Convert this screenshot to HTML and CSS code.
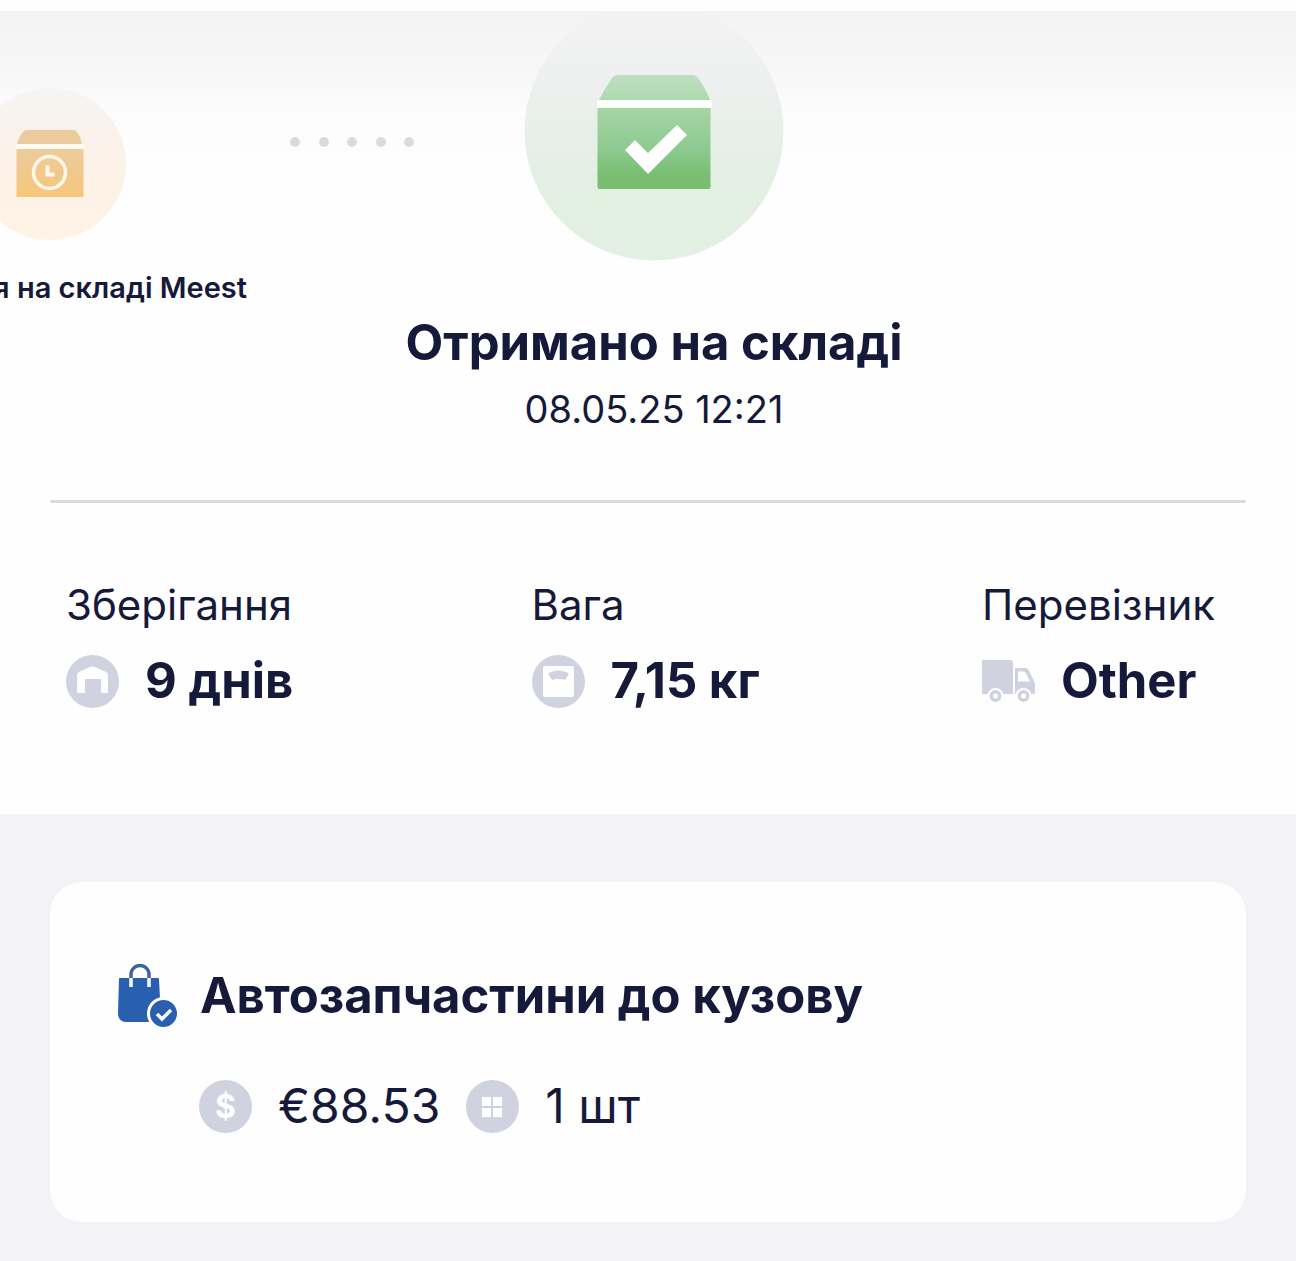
FILE: index.html
```html
<!DOCTYPE html>
<html lang="uk">
<head>
<meta charset="utf-8">
<meta name="viewport" content="width=device-width, initial-scale=1">
<title>Отримано на складі</title>
<link rel="stylesheet" href="styles.css">
</head>
<body>
<main class="page">
  <section class="tracker" aria-label="Статус">
    <div class="previous">
      <div class="previous-step">
        <svg class="previous-icon" viewBox="0 0 152 152" aria-hidden="true">
          <defs>
            <linearGradient id="amber-disc" x1="0" y1="0" x2="0" y2="1">
              <stop offset="0" stop-color="#f5f5f3"/><stop offset=".3" stop-color="#faf2eb"/><stop offset=".65" stop-color="#fdf2e6"/><stop offset="1" stop-color="#fef3e4"/>
            </linearGradient>
            <linearGradient id="amber-box" x1="0" y1="0" x2="0" y2="1">
              <stop offset="0" stop-color="#eccb9d"/><stop offset="1" stop-color="#f6c67b"/>
            </linearGradient>
          </defs>
          <circle cx="76" cy="76" r="76" fill="url(#amber-disc)"/>
          <path d="M53 42h46q2 0 3 1 4 4 6 13H43q2-8 7-13 1-1 3-1z" fill="#eacb9e"/>
          <path d="M42 56h68v5H42z" fill="#fffaf2"/>
          <path d="M42.500 61h67v48h-67z" fill="url(#amber-box)"/>
          <circle cx="75.500" cy="84.500" r="16" fill="none" stroke="#fff8ea" stroke-width="3.500"/>
          <path d="M73.500 77.500v9h7" fill="none" stroke="#fff8ea" stroke-width="4"/>
        </svg>
        <p class="previous-label">я на складі Meest</p>
      </div>
      <div class="dots" aria-hidden="true"><i></i><i></i><i></i><i></i><i></i></div>
    </div>
    <div class="current">
      <svg class="current-icon" viewBox="0 0 260 260" aria-hidden="true">
        <defs>
          <linearGradient id="green-disc" x1="0" y1="0" x2="0" y2="1">
            <stop offset="0" stop-color="#f3f3f3"/><stop offset=".3" stop-color="#eef0ef"/><stop offset=".55" stop-color="#e6efe8"/><stop offset=".8" stop-color="#e1f0e0"/><stop offset="1" stop-color="#e3f0e4"/>
          </linearGradient>
          <linearGradient id="green-box" x1="0" y1="0" x2="0" y2="1">
            <stop offset="0" stop-color="#a6d4a6"/><stop offset=".5" stop-color="#8dca8f"/><stop offset=".85" stop-color="#78bd70"/><stop offset="1" stop-color="#7abd73"/>
          </linearGradient>
          <linearGradient id="green-lid" x1="0" y1="0" x2="0" y2="1">
            <stop offset="0" stop-color="#bedfbf"/><stop offset="1" stop-color="#aed9b0"/>
          </linearGradient>
        </defs>
        <circle cx="130" cy="130" r="129.500" fill="url(#green-disc)"/>
        <path d="M94 74h74q4 0 6 3 7 9 12 22H75q6-12 13-22 2-3 6-3z" fill="url(#green-lid)"/>
        <path d="M73 99h115v8H73z" fill="#f9fffa"/>
        <path d="M73.500 107h113v79q0 2-2 2h-109q-2 0-2-2z" fill="url(#green-box)"/>
        <path d="M101 149l10-10 13 13 29-28 10 10-39 39z" fill="#fff"/>
      </svg>
      <h1 class="current-title">Отримано на складі</h1>
      <p class="current-date">08.05.25 12:21</p>
    </div>
  </section>

  <hr class="divider">

  <dl class="facts">
    <div class="fact">
      <dt>Зберігання</dt>
      <dd>
        <svg class="icon" viewBox="0 0 53 53" aria-hidden="true"><circle cx="26.500" cy="26.500" r="26.500" fill="#d0d3df"/><path d="M11 38V20q0-2 2-3l11-5q2.500-1 5 0l11 5q2 1 2 3v18h-7V25q0-1-1-1H20q-1 0-1 1v13z" fill="#fff"/></svg>
        9 днів
      </dd>
    </div>
    <div class="fact">
      <dt>Вага</dt>
      <dd>
        <svg class="icon" viewBox="0 0 53 53" aria-hidden="true"><circle cx="26.500" cy="26.500" r="26.500" fill="#d0d3df"/><rect x="11" y="11" width="31" height="31" rx="2" fill="#fff"/><path d="M16 19q2-3 10.500-3.500Q35 16 37 19l-4 6q-2-1-6.500-1t-6.500 1z" fill="#d0d3df"/></svg>
        7,15 кг
      </dd>
    </div>
    <div class="fact">
      <dt>Перевізник</dt>
      <dd>
        <svg class="icon" viewBox="0 0 53 53" aria-hidden="true"><path d="M0 5h28q3 0 3 3v31H0z" fill="#d0d3df"/><path d="M33 13h10q3 0 4 3l5 10q1 2 1 4v9H33z" fill="#d0d3df"/><path d="M36 16.500h5q2 0 3 2l4 8H36z" fill="#fff"/><g fill="#d0d3df" stroke="#fff" stroke-width="2"><circle cx="13.500" cy="41" r="7"/><circle cx="41.500" cy="41" r="7"/></g><circle cx="13.500" cy="41" r="2.500" fill="#fff"/><circle cx="41.500" cy="41" r="2.500" fill="#fff"/></svg>
        Other
      </dd>
    </div>
  </dl>

  <section class="parcel">
    <article class="card">
      <h2 class="card-title">
        <svg class="bag" viewBox="0 0 60 64" aria-hidden="true"><path d="M2 14h38q1 0 1 1l2 39q0 4-4 4H9q-9 0-9-9L1 15q0-1 1-1z" fill="#285faf"/><path d="M13 14V10.500a9 9 0 0 1 18 0V14" fill="none" stroke="#3a65a2" stroke-width="3.500"/><path d="M13 14v9M31 14v9" stroke="#fff" stroke-width="3.500"/><circle cx="45.500" cy="49.500" r="15" fill="#285faf" stroke="#fff" stroke-width="3"/><path d="M39 50l5 5 9-9" fill="none" stroke="#fff" stroke-width="3.500"/></svg>
        Автозапчастини до кузову
      </h2>
      <div class="card-row">
        <span class="coin" aria-hidden="true">$</span>
        <span class="price">€88.53</span>
        <svg class="icon" viewBox="0 0 53 53" aria-hidden="true"><circle cx="26.500" cy="26.500" r="26.500" fill="#d0d3df"/><path d="M16 17h9v9h-9zM27 17h9v9h-9zM16 28h9v9h-9zM27 28h9v9h-9z" fill="#fff"/></svg>
        <span class="count">1 шт</span>
      </div>
    </article>
  </section>
</main>
</body>
</html>
```

FILE: styles.css
```css
* {
  box-sizing: border-box;
}

body {
  margin: 0;
  background: #f3f3f7;
  color: #15193a;
  font-family: Inter, "Noto Sans", sans-serif;
}

h1, h2, p, dl, dd {
  margin: 0;
}

.page {
  padding-top: 11px;
  background: #fefefe;
}

/* Delivery steps */
.tracker {
  display: grid;
  grid-template-columns: minmax(0, 1fr) auto minmax(0, 1fr);
  padding-left: 12px;
  overflow: hidden;
  background: linear-gradient(#f3f3f3, #f8f8f8 72px, #fcfcfc 100px, #fefefe 160px);
}

.previous {
  display: flex;
  align-items: flex-start;
  margin-left: -159px;
  padding-top: 77px;
}

.previous-step {
  display: flex;
  flex: none;
  flex-direction: column;
  width: 394px;
}

.previous-icon {
  align-self: center;
  width: 152px;
  height: 152px;
}

.previous-label {
  margin-top: 32px;
  font-size: 29px;
  font-weight: 600;
  line-height: 32px;
  text-align: right;
}

.dots {
  display: flex;
  flex: none;
  justify-content: space-between;
  width: 124px;
  margin: 49px 0 0 43px;
}

.dots i {
  width: 10px;
  height: 10px;
  border-radius: 50%;
  background: #d9dbde;
}

.current {
  display: flex;
  flex-direction: column;
  align-items: center;
  text-align: center;
}

.current-icon {
  width: 260px;
  height: 260px;
  margin-top: -10px;
}

.current-title {
  margin-top: 52px;
  font-size: 49px;
  font-weight: 700;
  line-height: 60px;
}

.current-date {
  margin-top: 12px;
  font-size: 38px;
  line-height: 48px;
}

.divider {
  height: 3px;
  margin: 67px 50px 0;
  border: 0;
  border-radius: 2px;
  background: #d9dade;
}

/* Storage, weight, carrier */
.facts {
  display: grid;
  grid-template-columns: 31fr 30fr 246px;
  padding: 78px 68px 103px 66px;
}

.fact dt {
  font-size: 42px;
  line-height: 48px;
}

.fact dd {
  display: flex;
  align-items: center;
  gap: 26px;
  margin-top: 22px;
  font-size: 49px;
  font-weight: 700;
  line-height: 60px;
  white-space: nowrap;
}

.icon {
  flex: none;
  width: 53px;
  height: 53px;
}

/* Parcel contents */
.parcel {
  padding: 68px 50px 39px;
  background: #f3f3f7;
}

.card {
  padding: 82px 68px 86px;
  border-radius: 32px;
  background: #fefefe;
}

.card-title {
  display: flex;
  align-items: center;
  gap: 22px;
  font-size: 49px;
  font-weight: 700;
  line-height: 64px;
}

.bag {
  flex: none;
  width: 60px;
  height: 64px;
}

.card-row {
  display: flex;
  align-items: center;
  gap: 26px;
  margin-top: 48px;
  padding-left: 81px;
  font-size: 48px;
  line-height: 60px;
}

.coin {
  flex: none;
  width: 53px;
  height: 53px;
  border-radius: 50%;
  background: #d0d3df;
  color: #fff;
  font-size: 32px;
  font-weight: 700;
  line-height: 53px;
  text-align: center;
}
```
